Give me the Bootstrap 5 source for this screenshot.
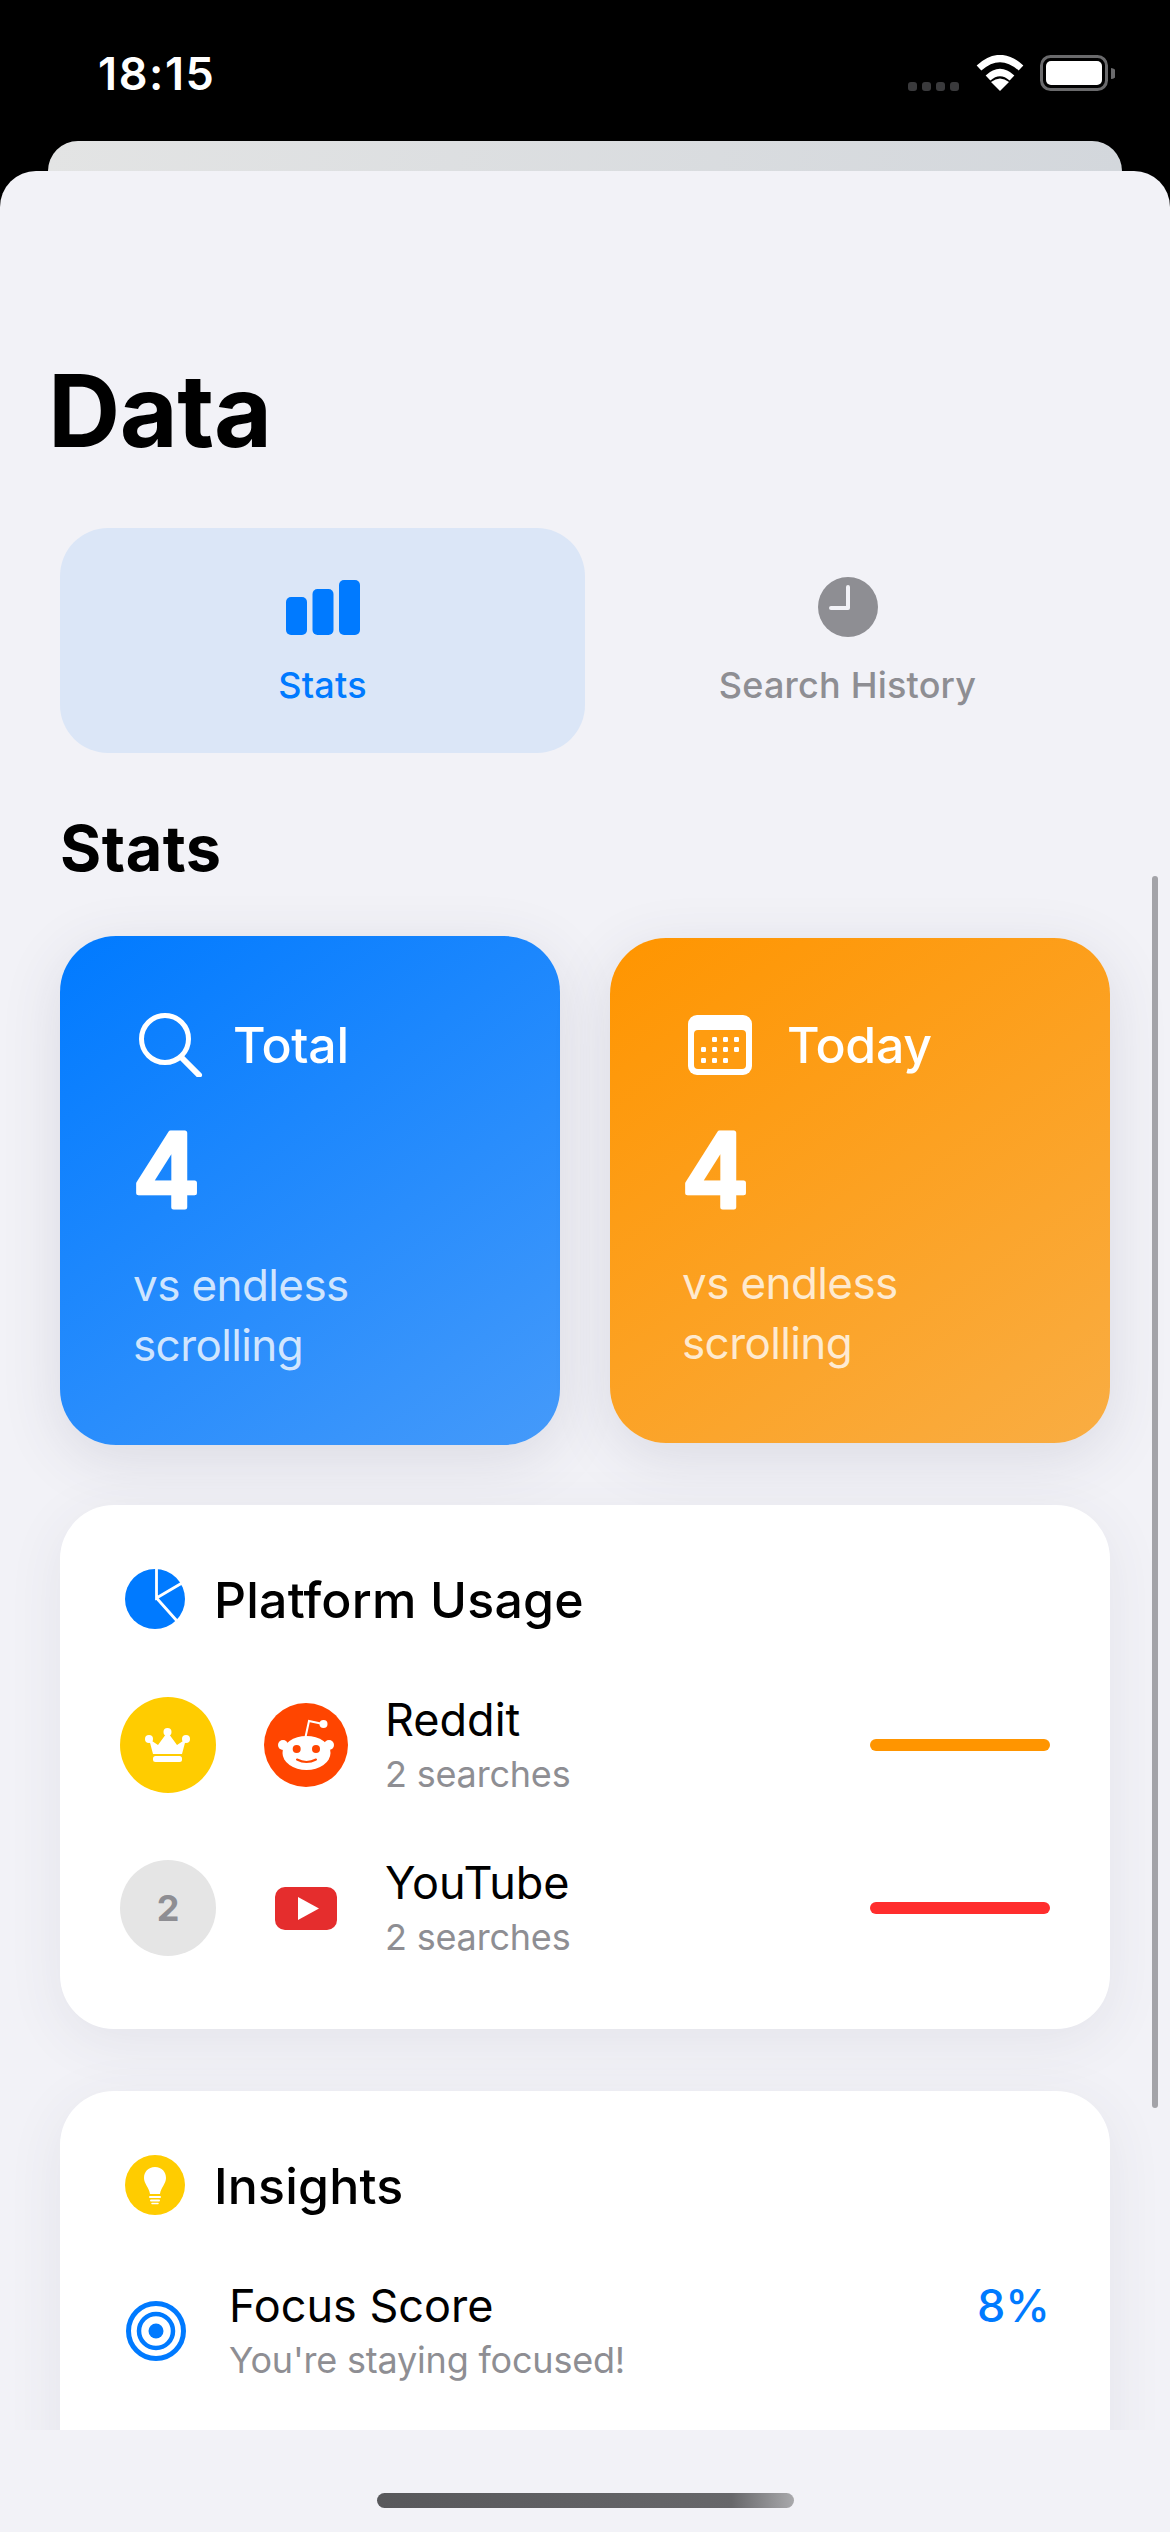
<!DOCTYPE html>
<html lang="en">
<head>
    <title>Data</title>
    <meta name="viewport" content="width=device-width, initial-scale=1">
    <link href="https://cdn.jsdelivr.net/npm/bootstrap@5.3.0/dist/css/bootstrap.min.css" rel="stylesheet">
    <script src="https://cdn.jsdelivr.net/npm/bootstrap@5.3.0/dist/js/bootstrap.bundle.min.js"></script>
    <style>
        html, body {
            height: 2532px;
            overflow: hidden;
        }
        body {
            background-color: #000;
            font-family: Inter, "Liberation Sans", sans-serif;
            color: #000;
        }
        svg {
            display: block;
            flex-shrink: 0;
        }
        .status-bar {
            height: 141px;
            padding: 0 55px 0 98px;
        }
        .status-time {
            font-size: 45px;
            font-weight: 600;
            letter-spacing: 1.6px;
            line-height: 44px;
            color: #fff;
            margin-top: 52px;
        }
        .status-icons {
            margin-top: 55px;
        }
        .signal-dots {
            gap: 5px;
            margin-top: 27px;
            margin-right: 17px;
        }
        .signal-dots span {
            width: 9px;
            height: 9px;
            border-radius: 3px;
            background: #3a3a3c;
        }
        .back-sheet {
            height: 30px;
            margin: 0 48px;
            border-radius: 30px 30px 0 0;
            background: linear-gradient(100deg, #e3e4e4, #d3d7dc);
        }
        .front-sheet {
            height: 2361px;
            border-radius: 36px 36px 0 0;
            background: #f2f2f7;
        }
        .scroll-area {
            height: 2259px;
            overflow: hidden;
        }
        .page-title {
            font-size: 100px;
            font-weight: 700;
            line-height: 100px;
            letter-spacing: -.5px;
            margin: 190px 0 0 48px;
        }
        .tab-row {
            margin: 67px 60px 0;
        }
        .tab-item {
            width: 525px;
            height: 225px;
            padding-top: 49px;
            border-radius: 48px;
            font-size: 36px;
            font-weight: 500;
            line-height: 44px;
            letter-spacing: .2px;
            color: #8e8e93;
        }
        .tab-item.is-on {
            background: #dbe6f7;
            color: #007aff;
        }
        .tab-icon {
            height: 60px;
            margin-bottom: 26px;
        }
        .section-title {
            font-size: 63px;
            font-weight: 700;
            line-height: 70px;
            letter-spacing: .5px;
            margin: 60px 0 0 60px;
        }
        .tile-row {
            margin: 53px 60px 0;
            gap: 50px;
        }
        .stat-tile {
            width: 500px;
            height: 509px;
            padding: 77px 0 0 73px;
            border-radius: 56px;
            color: #fff;
            box-shadow: 0 14px 60px rgba(60, 60, 90, .13);
        }
        .stat-tile.is-blue {
            background: linear-gradient(145deg, #007aff, #459afa);
        }
        .stat-tile.is-orange {
            height: 505px;
            margin-top: 2px;
            padding-top: 75px;
            padding-left: 72px;
            background: linear-gradient(145deg, #ff9500, #f9ad43);
        }
        .tile-head {
            height: 64px;
            gap: 30px;
            font-size: 50px;
            font-weight: 550;
            letter-spacing: -.3px;
            padding-left: 6px;
        }
        .is-orange .tile-head {
            gap: 35px;
        }
        .tile-num {
            margin: 26px 0 22px -3px;
        }
        .is-orange .tile-num {
            margin-bottom: 20px;
        }
        .tile-num text {
            font-family: Inter, sans-serif;
            font-size: 102px;
            font-weight: 500;
            fill: #fff;
            stroke: #fff;
            stroke-width: 5px;
            stroke-linejoin: round;
        }
        .tile-note {
            font-size: 44px;
            line-height: 60px;
            letter-spacing: -.6px;
            color: rgba(255, 255, 255, .78);
        }
        .panel-card {
            border: 0;
            border-radius: 54px;
            box-shadow: 0 12px 56px rgba(60, 60, 90, .08);
            margin: 60px 60px 0;
        }
        .panel-card.is-usage {
            height: 524px;
            padding: 64px 60px 0;
        }
        .panel-card.is-insights {
            height: 500px;
            margin-top: 62px;
            padding: 64px 60px 0;
        }
        .panel-head {
            gap: 29px;
            height: 60px;
            padding-left: 5px;
            padding-top: 2px;
            font-size: 50px;
            font-weight: 500;
            letter-spacing: .2px;
        }
        .panel-head svg {
            margin-top: -2px;
        }
        .usage-row {
            height: 96px;
            margin-top: 67px;
        }
        .usage-row.is-first {
            margin-top: 68px;
        }
        .rank-dot {
            width: 96px;
            height: 96px;
            border-radius: 50%;
            background: #e5e5e5;
            color: #8e8e93;
            font-size: 36px;
            font-weight: 700;
        }
        .rank-dot.is-top {
            background: #ffcc00;
        }
        .logo-box {
            width: 84px;
            margin: 0 37px 0 48px;
        }
        .row-name {
            font-size: 45px;
            line-height: 52px;
        }
        .row-sub {
            font-size: 36px;
            line-height: 44px;
            letter-spacing: -.2px;
            margin-top: 6px;
            color: #8e8e93;
        }
        .usage-bar {
            width: 180px;
            height: 12px;
            border-radius: 6px;
            margin-top: -1px;
        }
        .focus-row {
            margin-top: 65px;
            padding-left: 6px;
            gap: 43px;
        }
        .focus-value {
            font-size: 45px;
            font-weight: 500;
            line-height: 52px;
            color: #007aff;
        }
        .home-bar {
            width: 417px;
            height: 15px;
            margin: 63px auto 0;
            border-radius: 8px;
            background: linear-gradient(90deg, #58585b, #67676a 85%, #a9a9ac);
        }
        .scroll-thumb {
            position: absolute;
            right: 12px;
            top: 876px;
            width: 6px;
            height: 1232px;
            border-radius: 3px;
            background: #a3a3a8;
        }
    </style>
</head>
<body class="position-relative">

    <div class="status-bar d-flex justify-content-between">
        <div class="status-time">18:15</div>
        <div class="status-icons d-flex align-items-start">
            <div class="signal-dots d-flex"><span></span><span></span><span></span><span></span></div>
            <svg width="48" height="36" viewBox="0 0 48 36" fill="none" stroke="#fff" stroke-width="7">
                <path d="M3 13Q24 -6 45 13"/>
                <path d="M12 23Q24 12 36 23"/>
                <path d="M24 36L15 27Q24 20 33 27Z" fill="#fff" stroke="none"/>
            </svg>
            <svg class="ms-3" width="75" height="36" viewBox="0 0 75 36">
                <rect x="1.5" y="1.5" width="65" height="33" rx="9" fill="none" stroke="#6a6a6c" stroke-width="3"/>
                <rect x="6" y="6" width="56" height="24" rx="5" fill="#fff"/>
                <path d="M71 13a5 5 0 0 1 0 11z" fill="#6a6a6c"/>
            </svg>
        </div>
    </div>
    <div class="back-sheet"></div>

    <div class="front-sheet">
        <div class="scroll-area">
            <h1 class="page-title">Data</h1>

            <div class="tab-row d-flex">
                <div class="tab-item is-on d-flex flex-column align-items-center">
                    <div class="tab-icon">
                        <svg width="74" height="58" viewBox="0 0 74 58" fill="#007aff">
                            <rect y="20" width="21" height="38" rx="5"/>
                            <rect x="26.500" y="12" width="21" height="46" rx="5"/>
                            <rect x="53" y="3" width="21" height="55" rx="5"/>
                        </svg>
                    </div>
                    <div>Stats</div>
                </div>
                <div class="tab-item d-flex flex-column align-items-center">
                    <div class="tab-icon">
                        <svg width="60" height="60" viewBox="0 0 60 60">
                            <circle cx="30" cy="30" r="30" fill="#8e8e93"/>
                            <path d="M30 10V31H13" fill="none" stroke="#f2f2f7" stroke-width="4" stroke-linecap="round" stroke-linejoin="round"/>
                        </svg>
                    </div>
                    <div>Search History</div>
                </div>
            </div>

            <h2 class="section-title">Stats</h2>

            <div class="tile-row d-flex">
                <div class="stat-tile is-blue">
                    <div class="tile-head d-flex align-items-center">
                        <svg width="64" height="64" viewBox="0 0 64 64" fill="none" stroke="#fff">
                            <circle cx="26" cy="26" r="23.500" stroke-width="5"/>
                            <path d="M43 45L60 62" stroke-width="6" stroke-linecap="round"/>
                        </svg>
                        <span>Total</span>
                    </div>
                    <svg class="tile-num" width="90" height="130" viewBox="0 0 90 130"><text x="3" y="104">4</text></svg>
                    <div class="tile-note">vs endless<br>scrolling</div>
                </div>
                <div class="stat-tile is-orange">
                    <div class="tile-head d-flex align-items-center">
                        <svg width="64" height="60" viewBox="0 0 64 60">
                            <rect width="64" height="60" rx="9" fill="#fff"/>
                            <rect x="6" y="15" width="52" height="39" rx="4" fill="#ff9c10"/>
                            <g fill="#fff">
                                <rect x="24" y="22" width="5" height="5" rx="1.200"/><rect x="35" y="22" width="5" height="5" rx="1.200"/><rect x="46" y="22" width="5" height="5" rx="1.200"/>
                                <rect x="13" y="32" width="5" height="5" rx="1.200"/><rect x="24" y="32" width="5" height="5" rx="1.200"/><rect x="35" y="32" width="5" height="5" rx="1.200"/><rect x="46" y="32" width="5" height="5" rx="1.200"/>
                                <rect x="13" y="43" width="5" height="5" rx="1.200"/><rect x="24" y="43" width="5" height="5" rx="1.200"/><rect x="35" y="43" width="5" height="5" rx="1.200"/>
                            </g>
                        </svg>
                        <span>Today</span>
                    </div>
                    <svg class="tile-num" width="90" height="130" viewBox="0 0 90 130"><text x="3" y="104">4</text></svg>
                    <div class="tile-note">vs endless<br>scrolling</div>
                </div>
            </div>

            <div class="card panel-card is-usage">
                <div class="panel-head d-flex align-items-center">
                    <svg width="60" height="60" viewBox="0 0 60 60">
                        <circle cx="30" cy="30" r="30" fill="#007aff"/>
                        <path d="M31.500 0V29L57 14M31.500 29L52 52" fill="none" stroke="#fff" stroke-width="2.800"/>
                    </svg>
                    <span>Platform Usage</span>
                </div>

                <div class="usage-row is-first d-flex align-items-center">
                    <div class="rank-dot is-top d-flex align-items-center justify-content-center">
                        <svg width="96" height="96" viewBox="0 0 96 96" fill="#fff">
                            <circle cx="29" cy="42" r="4"/><circle cx="47.500" cy="35" r="4"/><circle cx="66" cy="42" r="4"/>
                            <path d="M33 57L29 42L38 48L47.500 35L57 48L66 42L62 57Z"/>
                            <rect x="33" y="59" width="29" height="6" rx="2.500"/>
                        </svg>
                    </div>
                    <div class="logo-box">
                        <svg width="84" height="84" viewBox="0 0 84 84">
                            <circle cx="42" cy="42" r="42" fill="#ff4500"/>
                            <path d="M41.500 34L45 18L59 21" fill="none" stroke="#fff" stroke-width="2"/>
                            <circle cx="59.500" cy="21" r="4" fill="#fff"/>
                            <circle cx="19" cy="42" r="5" fill="#fff"/><circle cx="65" cy="42" r="5" fill="#fff"/>
                            <ellipse cx="42.500" cy="50" rx="24" ry="17" fill="#fff"/>
                            <circle cx="32.700" cy="46" r="4" fill="#ff4500"/><circle cx="52" cy="46" r="4" fill="#ff4500"/>
                            <path d="M33 56.500Q42.500 61.500 52 56.500" fill="none" stroke="#ff4500" stroke-width="2" stroke-linecap="round"/>
                        </svg>
                    </div>
                    <div class="flex-grow-1">
                        <div class="row-name">Reddit</div>
                        <div class="row-sub">2 searches</div>
                    </div>
                    <div class="usage-bar" style="background:#ff9500"></div>
                </div>

                <div class="usage-row d-flex align-items-center">
                    <div class="rank-dot d-flex align-items-center justify-content-center">2</div>
                    <div class="logo-box d-flex justify-content-center">
                        <svg width="62" height="43" viewBox="0 0 62 43">
                            <rect width="62" height="43" rx="10" fill="#e52d2d"/>
                            <path d="M23 10L44 21.500L23 33Z" fill="#fff"/>
                        </svg>
                    </div>
                    <div class="flex-grow-1">
                        <div class="row-name">YouTube</div>
                        <div class="row-sub">2 searches</div>
                    </div>
                    <div class="usage-bar" style="background:#ff2d2d"></div>
                </div>
            </div>

            <div class="card panel-card is-insights">
                <div class="panel-head d-flex align-items-center">
                    <svg width="60" height="60" viewBox="0 0 60 60">
                        <circle cx="30" cy="30" r="30" fill="#ffcc00"/>
                        <path d="M30 12C23 12 19 17 19 23C19 29 24 32 25 39H35C36 32 41 29 41 23C41 17 37 12 30 12Z" fill="#fff"/>
                        <path d="M25 42H35M26 45.500H34" stroke="#fff" stroke-width="2" stroke-linecap="round"/>
                        <path d="M27 48.500H33" stroke="#fff" stroke-width="1.500" stroke-linecap="round"/>
                    </svg>
                    <span>Insights</span>
                </div>
                <div class="focus-row d-flex align-items-center">
                    <svg width="60" height="60" viewBox="0 0 60 60" fill="none" stroke="#007aff">
                        <circle cx="30" cy="30" r="27.500" stroke-width="5"/>
                        <circle cx="30" cy="30" r="17" stroke-width="4.500"/>
                        <circle cx="30" cy="30" r="7.500" fill="#007aff" stroke="none"/>
                    </svg>
                    <div class="flex-grow-1">
                        <div class="row-name">Focus Score</div>
                        <div class="row-sub">You're staying focused!</div>
                    </div>
                    <div class="focus-value align-self-start">8%</div>
                </div>
            </div>
        </div>
        <div class="home-bar"></div>
    </div>

    <div class="scroll-thumb"></div>

</body>
</html>
